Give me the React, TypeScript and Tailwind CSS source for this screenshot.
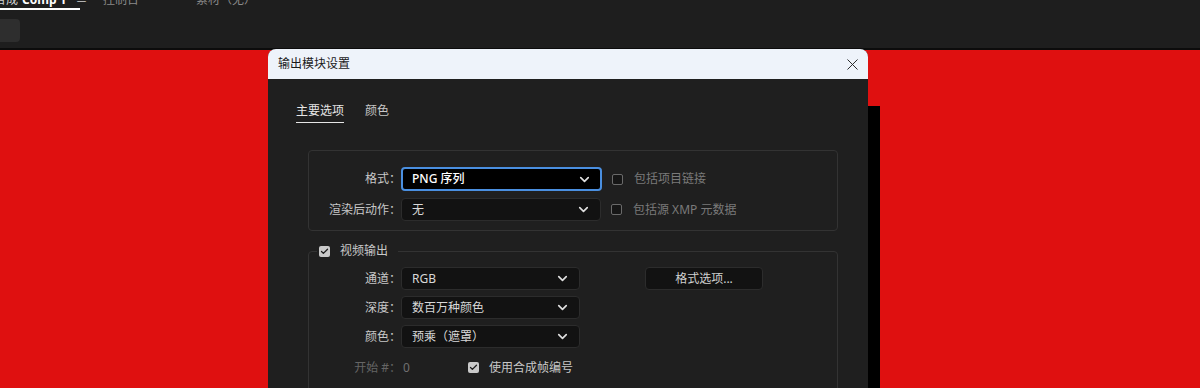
import { ChevronDown, Check, X } from "lucide-react";

const font = {
  fontFamily: '"Noto Sans", "Noto Sans CJK SC", sans-serif',
};

function Select({
  value,
  width,
  focused = false,
}: {
  value: string;
  width: string;
  focused?: boolean;
}) {
  return (
    <div
      className={
        focused
          ? `${width} h-[24px] flex items-center justify-between pl-[9px] pr-[8px] rounded-[4px] bg-black border-2 border-[#4a8fe0] text-[12px] text-white font-medium`
          : `${width} h-[23px] flex items-center justify-between pl-[10px] pr-[9px] rounded-[4px] bg-[#121212] border border-[#2c2c2c] text-[12px] text-[#d8d8d8]`
      }
    >
      <span>{value}</span>
      <ChevronDown size={15} strokeWidth={2.6} className="text-[#e0e0e0]" />
    </div>
  );
}

function Box({ checked = false }: { checked?: boolean }) {
  if (checked) {
    return (
      <span className="w-[11px] h-[11px] rounded-[2px] bg-[#c9c9c9] flex items-center justify-center shrink-0">
        <Check size={9} strokeWidth={3.5} className="text-[#1c1c1c]" />
      </span>
    );
  }
  return (
    <span className="w-[11px] h-[11px] rounded-[2px] border-[1.5px] border-[#6a6a6a] bg-[#161616] shrink-0" />
  );
}

function Row({ label, children }: { label: string; children: React.ReactNode }) {
  return (
    <div className="flex items-center">
      <span className="w-[92px] text-right text-[12px] text-[#c8c8c8]">{label}</span>
      {children}
    </div>
  );
}

export default function App() {
  return (
    <div
      className="w-[1200px] h-[388px] flex flex-col bg-[#1e1e1e] overflow-hidden relative"
      style={font}
    >
      {/* top panel tabs */}
      <div className="h-[48px] shrink-0 flex flex-col">
        <div className="h-[10px] flex items-end text-[12px] leading-[14px] whitespace-nowrap">
          <div className="-ml-[6px] w-[86px] pb-[1px] border-b-2 border-white flex items-center">
            <span className="text-[#cfcfcf]">合成</span>
            <span className="text-white font-bold ml-[4px]">Comp 1</span>
            <span className="text-[#cfcfcf] ml-[9px]">≡</span>
          </div>
          <span className="ml-[23px] pb-[3px] text-[#8a8a8a]">控制台</span>
          <span className="ml-[57px] pb-[3px] text-[#8a8a8a]">素材（无）</span>
        </div>
        <div className="mt-[9px] w-[20px] h-[23px] bg-[#2e2e2e] rounded-r-[4px]" />
      </div>
      <div className="h-[2px] bg-[#0c0c0c] shrink-0" />

      {/* composition viewer */}
      <div className="flex-1 flex bg-[#df1010]">
        <div className="w-[868px] shrink-0" />
        <div className="pt-[56px] flex">
          <div className="w-[12px] bg-black" />
        </div>
      </div>

      {/* dialog */}
      <div className="absolute left-[268px] top-[49px] w-[600px] bottom-0 rounded-t-[8px] overflow-hidden flex flex-col bg-[#1f1f1f]">
        <div className="h-[30px] shrink-0 bg-[#eef3fa] flex items-center justify-between pl-[10px] pr-[6px]">
          <span className="text-[12px] text-[#1a1a1a]">输出模块设置</span>
          <X size={19} strokeWidth={1.2} className="text-[#222]" />
        </div>

        <div className="flex-1 pl-[40px] pr-[30px]">
          <div className="pt-[24px] flex gap-[21px] text-[12px] leading-[16px] -ml-[12px]">
            <span className="text-[#e6e6e6] pb-[3px] border-b border-[#e6e6e6]">主要选项</span>
            <span className="text-[#c8c8c8]">颜色</span>
          </div>

          <div className="mt-[27px] border border-[#333] rounded-[4px] pt-[16px] pb-[9px] flex flex-col gap-[7px]">
            <Row label="格式：">
              <Select value="PNG 序列" width="w-[201px]" focused />
              <span className="ml-[10px] flex items-center gap-[11px] text-[12px] text-[#7a7a7a]">
                <Box />
                包括项目链接
              </span>
            </Row>
            <Row label="渲染后动作：">
              <Select value="无" width="w-[200px]" />
              <span className="ml-[10px] flex items-center gap-[11px] text-[12px] text-[#7a7a7a]">
                <Box />
                包括源 XMP 元数据
              </span>
            </Row>
          </div>

          <fieldset className="mt-[12px] border border-[#333] rounded-[4px] pb-[30px]">
            <legend className="ml-[8px] px-[2px] pr-[10px] flex items-center gap-[10px] text-[12px] leading-[16px] text-[#c8c8c8]">
              <Box checked />
              视频输出
            </legend>
            <div className="pt-[8px] flex flex-col gap-[6px]">
              <Row label="通道：">
                <Select value="RGB" width="w-[179px]" />
                <div className="ml-[65px] w-[118px] h-[23px] rounded-[4px] bg-[#121212] border border-[#2c2c2c] flex items-center justify-center text-[12px] text-[#d0d0d0]">
                  格式选项...
                </div>
              </Row>
              <Row label="深度：">
                <Select value="数百万种颜色" width="w-[179px]" />
              </Row>
              <Row label="颜色：">
                <Select value="预乘（遮罩）" width="w-[179px]" />
              </Row>
              <div className="flex items-center h-[23px] mt-[2px]">
                <span className="w-[92px] text-right text-[12px] text-[#656565]">开始 #：</span>
                <span className="ml-[2px] text-[12px] text-[#707070]">0</span>
                <span className="ml-[58px] flex items-center gap-[10px] text-[12px] text-[#c8c8c8]">
                  <Box checked />
                  使用合成帧编号
                </span>
              </div>
            </div>
          </fieldset>
        </div>
      </div>
    </div>
  );
}
